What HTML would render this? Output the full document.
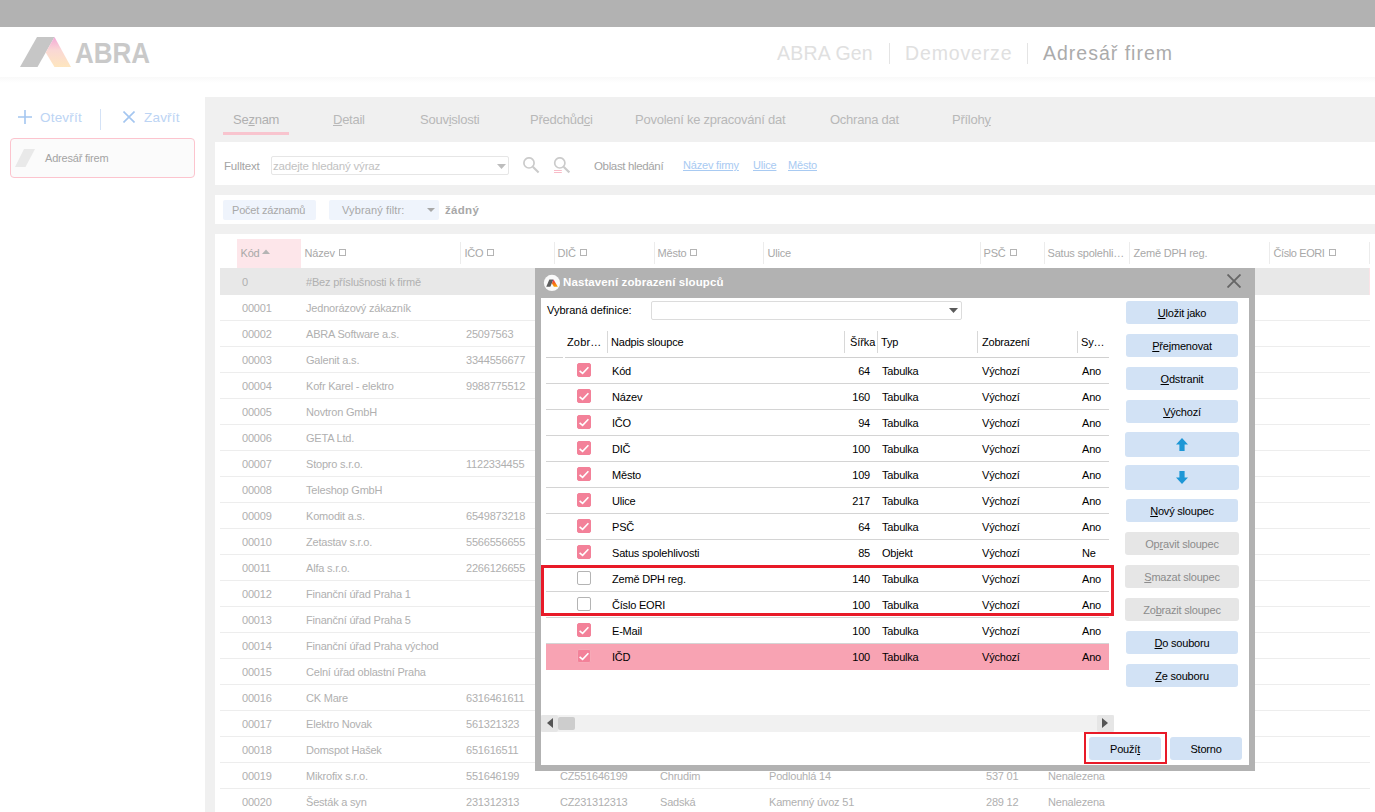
<!DOCTYPE html>
<html lang="cs"><head><meta charset="utf-8"><title>Adresář firem</title>
<style>
*{box-sizing:border-box;margin:0;padding:0}
html,body{width:1375px;height:812px;overflow:hidden;background:#fff}
body{position:relative;font-family:"Liberation Sans",sans-serif;font-size:11px;color:#b0b0b0;letter-spacing:-0.2px}
.abs,.topbar,.hdrline,.logo,.brand,.crumb,.side a,.side i,.panel,.tabs span,.bar,.tbl,.row,.row span,.th,.th span,.dlg,.dlg *{position:absolute}
.topbar{left:0;top:0;width:1375px;height:27px;background:#b2b2b2}
.hdrline{left:0;top:77px;width:1375px;height:6px;background:linear-gradient(#f9f9f9,#fff)}
.logo{left:20px;top:37px}
.brand{left:75px;top:37px;font-size:26px;line-height:26px;font-weight:bold;color:#c9c9c9;letter-spacing:0;transform:scaleY(1.17);transform-origin:0 0}
.crumb{top:40px;font-size:19.5px;line-height:26px;color:#e0e0e0;letter-spacing:0.2px;white-space:nowrap}
.crumb.cur{color:#ababab}
.vsep{position:absolute;width:1px;background:#e4e4e4}
.lnk{position:absolute;margin-top:1px;font-size:13.5px;line-height:18px;color:#bcd4f4;letter-spacing:0.2px;white-space:nowrap}
.item{position:absolute;left:10px;top:138px;width:185px;height:40px;border:1px solid #fcc4ce;border-radius:4px;background:#fbfbfb}
.item span{position:absolute;left:34px;top:12px;line-height:14px;color:#a4a4a4;white-space:nowrap}
.panel{left:205px;top:97px;width:1170px;height:715px;background:#f0f0f0}
.tab{position:absolute;top:111px;font-size:13px;line-height:18px;color:#b8b8b8;letter-spacing:-0.25px;white-space:nowrap}
.tab u{text-decoration-thickness:1px;text-underline-offset:1px}
.tabline{position:absolute;left:223px;top:132px;width:66px;height:3px;background:#f8c4ce}
.bar{left:215px;width:1160px;background:#fff}
.t{position:absolute;white-space:nowrap;line-height:14px}
.tbl{left:0;top:0;width:1375px;height:812px;overflow:hidden}
.row{left:220px;width:1150px;height:26px;border-bottom:1px solid #ededed;line-height:27px}
.row.sel{background:#e8e8e8;border-right:1px solid #fbe3e7;border-bottom:0;height:27px;margin-top:-1px;line-height:29px}
.row span{top:0;white-space:nowrap;margin-left:-220px}
.th{top:245.5px;margin-left:-0.5px;line-height:14px;color:#a8a8a8;white-space:nowrap}
.th b{display:inline-block;width:7px;height:7px;border:1px solid #b4b4b4;margin-left:4px;vertical-align:1px}
.hs{position:absolute;top:242px;width:1px;height:22px;background:#ececec}
/* dialog */
.dlg{left:535px;top:268px;width:720px;height:503px;background:#b2b2b2;color:#000}
.dlg .in{left:6px;top:30px;width:708px;height:467px;background:#fff}
.dlg .ttl{left:28px;top:7px;font-size:11.5px;line-height:15px;font-weight:bold;color:#fff;letter-spacing:0.1px;white-space:nowrap}
.dt{position:absolute;white-space:nowrap;line-height:14px;color:#000}
.btn{position:absolute;left:1126px;width:112px;height:23px;border-radius:3px;background:#d2e2f5;color:#000;text-align:center;line-height:24px;white-space:nowrap}
.btn.dis{background:#e6e6e6;color:#8c8c8c;left:1125px;width:114px}
.btn u{text-underline-offset:1px}
.drow{position:absolute;left:546px;width:563px;height:26px;border-bottom:1px solid #d4d4d4;line-height:27px;color:#000}
.drow.dsel{background:#f8a3b3;border-bottom:0;height:26px;line-height:27px}
.drow span{position:absolute;top:0;white-space:nowrap}
.drow .c1{left:66px}.drow .c2{right:239px}.drow .c3{left:336px}.drow .c4{left:436px}.drow .c5{left:536px}
.cb{position:absolute;left:31px;top:5px;width:14px;height:14px;border:1px solid #b4b4b4;border-radius:2px;background:#fff}
.cb.on{background:#f38199;border-color:#f38199}
.dsel .cb{top:5px}
.dsel .cb.on{border-color:#f7a9b7}
.cb svg{position:absolute;left:-1px;top:-1px}
.red{position:absolute;border:3px solid #e81a28}

</style></head><body>
<div class="topbar"></div>
<div class="hdrline"></div>
<svg class="logo" width="52" height="31" viewBox="0 0 52 31"><defs><linearGradient id="lg" x1="0" y1="0" x2="0" y2="1"><stop offset="0" stop-color="#f4a8d8"/><stop offset="0.45" stop-color="#fad8d4"/><stop offset="1" stop-color="#fee6bf"/></linearGradient></defs><polygon points="17,0 34.5,0 17.5,30 0,30" fill="#c6c6c6"/><polygon points="34.5,0 51,30 34.5,30 25.7,15.5" fill="url(#lg)"/></svg>
<div class="brand">ABRA</div>
<div class="crumb" style="left:777px">ABRA Gen</div>
<div class="vsep" style="left:889px;top:43px;height:21px"></div>
<div class="crumb" style="left:905px;letter-spacing:0.85px">Demoverze</div>
<div class="vsep" style="left:1027px;top:43px;height:21px"></div>
<div class="crumb cur" style="left:1043px;letter-spacing:1px">Adresář firem</div>

<svg class="abs" style="left:18px;top:110px" width="14" height="14" viewBox="0 0 14 14"><path d="M7 0V14M0 7H14" stroke="#a4c6f0" stroke-width="1.6" fill="none"/></svg>
<div class="lnk" style="left:40px;top:108px">Otevřít</div>
<div class="vsep" style="left:100px;top:109px;height:21px;background:#d4e2f6"></div>
<svg class="abs" style="left:123px;top:111px" width="12" height="12" viewBox="0 0 12 12"><path d="M0.5 0.5L11.5 11.5M11.5 0.5L0.5 11.5" stroke="#a4c6f0" stroke-width="1.6" fill="none"/></svg>
<div class="lnk" style="left:144px;top:108px">Zavřít</div>
<div class="item"><svg class="abs" style="left:4px;top:10px" width="21" height="19" viewBox="0 0 21 19"><polygon points="9,0 20,0 10.5,18 0,18" fill="#e9e9e9"/></svg><span>Adresář firem</span></div>

<div class="panel"></div>
<div class="tab" style="left:233px;color:#b0b0b0">Se<u>z</u>nam</div>
<div class="tabline"></div>
<div class="tab" style="left:333px"><u>D</u>etail</div>
<div class="tab" style="left:420px">Souv<u>i</u>slosti</div>
<div class="tab" style="left:530px">Předchůd<u>c</u>i</div>
<div class="tab" style="left:635px">Povolení ke zpracování dat</div>
<div class="tab" style="left:830px">Ochrana dat</div>
<div class="tab" style="left:952px">Příloh<u>y</u></div>

<div class="bar" style="top:142px;height:43px"></div>
<div class="t" style="left:224px;top:159px;color:#a4a4a4;font-size:11.5px">Fulltext</div>
<div class="abs" style="left:271px;top:156px;width:238px;height:19px;border:1px solid #e6e6e6;border-radius:2px;background:#fff"></div>
<div class="t" style="left:273px;top:159px;color:#c2c2c2;font-size:11.5px">zadejte hledaný výraz</div>
<svg class="abs" style="left:497px;top:164px" width="9" height="5" viewBox="0 0 9 5"><polygon points="0,0 9,0 4.5,5" fill="#bdbdbd"/></svg>
<svg class="abs" style="left:523px;top:157px" width="17" height="17" viewBox="0 0 17 17"><circle cx="6" cy="5.9" r="5.1" fill="none" stroke="#cbcbcb" stroke-width="1.7"/><path d="M9.8 9.7L15.6 15.4" stroke="#cbcbcb" stroke-width="2.1"/></svg>
<svg class="abs" style="left:553px;top:157px" width="17" height="17" viewBox="0 0 17 17"><circle cx="6.8" cy="5.9" r="5.1" fill="none" stroke="#cbcbcb" stroke-width="1.7"/><path d="M10.6 9.7L16.4 15.4" stroke="#cbcbcb" stroke-width="2.1"/><path d="M1 13.5H8.8M1 15.5H8.8" stroke="#f8bcc8" stroke-width="1"/></svg>
<div class="t" style="left:594px;top:159px;color:#a4a4a4;font-size:11.5px;letter-spacing:-0.35px">Oblast hledání</div>
<div class="t" style="left:683px;top:158px;color:#a8caf2;text-decoration:underline">Název firmy</div>
<div class="t" style="left:753px;top:158px;color:#a8caf2;text-decoration:underline">Ulice</div>
<div class="t" style="left:788px;top:158px;color:#a8caf2;text-decoration:underline">Město</div>

<div class="bar" style="top:195px;height:29px"></div>
<div class="abs" style="left:223px;top:200px;width:93px;height:20px;border-radius:2px;background:#eff4fc"></div>
<div class="t" style="left:232px;top:203px;color:#a8a8a8">Počet záznamů</div>
<div class="abs" style="left:329px;top:200px;width:110px;height:20px;border-radius:2px;background:#eff4fc"></div>
<div class="t" style="left:342px;top:203px;color:#a8a8a8;letter-spacing:0.12px">Vybraný filtr:</div>
<svg class="abs" style="left:427px;top:208px" width="8" height="4" viewBox="0 0 8 4"><polygon points="0,0 8,0 4,4" fill="#a8a8a8"/></svg>
<div class="t" style="left:445px;top:203px;color:#a8a8a8;font-weight:bold;font-size:11.5px;letter-spacing:0.3px">žádný</div>

<div class="bar" style="top:234px;height:578px"></div>
<div class="abs" style="left:237px;top:239px;width:64px;height:29px;background:#fde6ea"></div>
<div class="th" style="left:241px">Kód <svg width="8" height="5" viewBox="0 0 8 5" style="margin-left:0;vertical-align:2.5px"><polygon points="0,5 8,5 4,0.5" fill="#b4b4b4"/></svg></div>
<div class="th" style="left:305px">Název<b></b></div>
<div class="hs" style="left:460px"></div>
<div class="th" style="left:465px">IČO<b></b></div>
<div class="hs" style="left:554px"></div>
<div class="th" style="left:558px">DIČ<b></b></div>
<div class="hs" style="left:654px"></div>
<div class="th" style="left:658px">Město<b></b></div>
<div class="hs" style="left:763px"></div>
<div class="th" style="left:768px">Ulice</div>
<div class="hs" style="left:980px"></div>
<div class="th" style="left:984px">PSČ<b></b></div>
<div class="hs" style="left:1044px"></div>
<div class="th" style="left:1048px">Satus spolehli…</div>
<div class="hs" style="left:1129px"></div>
<div class="th" style="left:1134px">Země DPH reg.</div>
<div class="hs" style="left:1269px"></div>
<div class="th" style="left:1274px;letter-spacing:-0.4px">Číslo EORI<b></b></div>
<div class="hs" style="left:1369px"></div>
<div class="tbl">
<div class="row sel" style="top:269px"><span style="left:242px">0</span><span style="left:306px">#Bez příslušnosti k firmě</span></div>
<div class="row" style="top:295px"><span style="left:242px">00001</span><span style="left:306px">Jednorázový zákazník</span></div>
<div class="row" style="top:321px"><span style="left:242px">00002</span><span style="left:306px">ABRA Software a.s.</span><span style="left:466px">25097563</span></div>
<div class="row" style="top:347px"><span style="left:242px">00003</span><span style="left:306px">Galenit a.s.</span><span style="left:466px">3344556677</span></div>
<div class="row" style="top:373px"><span style="left:242px">00004</span><span style="left:306px">Kofr Karel - elektro</span><span style="left:466px">9988775512</span></div>
<div class="row" style="top:399px"><span style="left:242px">00005</span><span style="left:306px">Novtron GmbH</span></div>
<div class="row" style="top:425px"><span style="left:242px">00006</span><span style="left:306px">GETA Ltd.</span></div>
<div class="row" style="top:451px"><span style="left:242px">00007</span><span style="left:306px">Stopro s.r.o.</span><span style="left:466px">1122334455</span></div>
<div class="row" style="top:477px"><span style="left:242px">00008</span><span style="left:306px">Teleshop GmbH</span></div>
<div class="row" style="top:503px"><span style="left:242px">00009</span><span style="left:306px">Komodit a.s.</span><span style="left:466px">6549873218</span></div>
<div class="row" style="top:529px"><span style="left:242px">00010</span><span style="left:306px">Zetastav s.r.o.</span><span style="left:466px">5566556655</span></div>
<div class="row" style="top:555px"><span style="left:242px">00011</span><span style="left:306px">Alfa s.r.o.</span><span style="left:466px">2266126655</span></div>
<div class="row" style="top:581px"><span style="left:242px">00012</span><span style="left:306px">Finanční úřad Praha 1</span></div>
<div class="row" style="top:607px"><span style="left:242px">00013</span><span style="left:306px">Finanční úřad Praha 5</span></div>
<div class="row" style="top:633px"><span style="left:242px">00014</span><span style="left:306px">Finanční úřad Praha východ</span></div>
<div class="row" style="top:659px"><span style="left:242px">00015</span><span style="left:306px">Celní úřad oblastní Praha</span></div>
<div class="row" style="top:685px"><span style="left:242px">00016</span><span style="left:306px">CK Mare</span><span style="left:466px">6316461611</span></div>
<div class="row" style="top:711px"><span style="left:242px">00017</span><span style="left:306px">Elektro Novak</span><span style="left:466px">561321323</span></div>
<div class="row" style="top:737px"><span style="left:242px">00018</span><span style="left:306px">Domspot Hašek</span><span style="left:466px">651616511</span></div>
<div class="row" style="top:763px"><span style="left:242px">00019</span><span style="left:306px">Mikrofix s.r.o.</span><span style="left:466px">551646199</span><span style="left:560px">CZ551646199</span><span style="left:660px">Chrudim</span><span style="left:769px">Podlouhlá 14</span><span style="left:986px">537 01</span><span style="left:1048px">Nenalezena</span></div>
<div class="row" style="top:789px"><span style="left:242px">00020</span><span style="left:306px">Šesták a syn</span><span style="left:466px">231312313</span><span style="left:560px">CZ231312313</span><span style="left:660px">Sadská</span><span style="left:769px">Kamenný úvoz 51</span><span style="left:986px">289 12</span><span style="left:1048px">Nenalezena</span></div>
</div>
<div class="dlg">
<div class="in"></div>
<svg style="left:8px;top:6px" width="18" height="18" viewBox="0 0 18 18"><defs><linearGradient id="ig" x1="0" y1="0" x2="0" y2="1"><stop offset="0" stop-color="#e81e78"/><stop offset="0.45" stop-color="#f4601e"/><stop offset="1" stop-color="#f9a400"/></linearGradient></defs><g transform="translate(0.45,0.45)"><circle cx="8.5" cy="8.5" r="8.1" fill="#fafafa"/><polygon points="5.9,5 10,5 6.9,12.2 2.8,12.2" fill="#5e5e5e"/><polygon points="10.1,5 14.4,12.2 10.4,12.2 8.4,8.8" fill="url(#ig)"/></g></svg>
<div class="ttl">Nastavení zobrazení sloupců</div>
<svg style="left:692px;top:6px" width="14" height="14" viewBox="0 0 14 14"><path d="M0.5 0.5L13.5 13.5M13.5 0.5L0.5 13.5" stroke="#666" stroke-width="1.9" fill="none"/></svg>
</div>
<div class="dt" style="left:547px;top:303px;letter-spacing:0">Vybraná definice:</div>
<div class="abs" style="left:651px;top:301px;width:311px;height:19px;border:1px solid #dcdcdc;border-radius:2px;background:#fff"></div>
<svg class="abs" style="left:949px;top:308px" width="9" height="5" viewBox="0 0 9 5"><polygon points="0,0 9,0 4.5,5" fill="#5a5a5a"/></svg>

<div class="dt" style="left:567px;top:335px;letter-spacing:0.15px">Zobr…</div>
<div class="dt" style="left:611px;top:335px">Nadpis sloupce</div>
<div class="dt" style="left:850px;top:335px;letter-spacing:-0.1px">Šířka</div>
<div class="dt" style="left:881px;top:335px">Typ</div>
<div class="dt" style="left:982px;top:335px">Zobrazení</div>
<div class="dt" style="left:1081px;top:335px">Sy…</div>
<div class="abs" style="left:607px;top:331px;width:1px;height:22px;background:#d8d8d8"></div>
<div class="abs" style="left:844px;top:331px;width:1px;height:22px;background:#d8d8d8"></div>
<div class="abs" style="left:877px;top:331px;width:1px;height:22px;background:#d8d8d8"></div>
<div class="abs" style="left:977px;top:331px;width:1px;height:22px;background:#d8d8d8"></div>
<div class="abs" style="left:1077px;top:331px;width:1px;height:22px;background:#d8d8d8"></div>
<div class="abs" style="left:546px;top:357px;width:17px;height:1px;background:#d0d0d0"></div>
<div class="abs" style="left:565px;top:357px;width:544px;height:1px;background:#d0d0d0"></div>
<div class="drow" style="top:358px"><i class="cb on"><svg width="14" height="14" viewBox="0 0 14 14"><path d="M2.6 7.9 L5.6 10.4 L11.4 4.3" fill="none" stroke="#fff" stroke-width="1.6"/></svg></i><span class="c1">Kód</span><span class="c2">64</span><span class="c3">Tabulka</span><span class="c4">Výchozí</span><span class="c5">Ano</span></div>
<div class="drow" style="top:384px"><i class="cb on"><svg width="14" height="14" viewBox="0 0 14 14"><path d="M2.6 7.9 L5.6 10.4 L11.4 4.3" fill="none" stroke="#fff" stroke-width="1.6"/></svg></i><span class="c1">Název</span><span class="c2">160</span><span class="c3">Tabulka</span><span class="c4">Výchozí</span><span class="c5">Ano</span></div>
<div class="drow" style="top:410px"><i class="cb on"><svg width="14" height="14" viewBox="0 0 14 14"><path d="M2.6 7.9 L5.6 10.4 L11.4 4.3" fill="none" stroke="#fff" stroke-width="1.6"/></svg></i><span class="c1">IČO</span><span class="c2">94</span><span class="c3">Tabulka</span><span class="c4">Výchozí</span><span class="c5">Ano</span></div>
<div class="drow" style="top:436px"><i class="cb on"><svg width="14" height="14" viewBox="0 0 14 14"><path d="M2.6 7.9 L5.6 10.4 L11.4 4.3" fill="none" stroke="#fff" stroke-width="1.6"/></svg></i><span class="c1">DIČ</span><span class="c2">100</span><span class="c3">Tabulka</span><span class="c4">Výchozí</span><span class="c5">Ano</span></div>
<div class="drow" style="top:462px"><i class="cb on"><svg width="14" height="14" viewBox="0 0 14 14"><path d="M2.6 7.9 L5.6 10.4 L11.4 4.3" fill="none" stroke="#fff" stroke-width="1.6"/></svg></i><span class="c1">Město</span><span class="c2">109</span><span class="c3">Tabulka</span><span class="c4">Výchozí</span><span class="c5">Ano</span></div>
<div class="drow" style="top:488px"><i class="cb on"><svg width="14" height="14" viewBox="0 0 14 14"><path d="M2.6 7.9 L5.6 10.4 L11.4 4.3" fill="none" stroke="#fff" stroke-width="1.6"/></svg></i><span class="c1">Ulice</span><span class="c2">217</span><span class="c3">Tabulka</span><span class="c4">Výchozí</span><span class="c5">Ano</span></div>
<div class="drow" style="top:514px"><i class="cb on"><svg width="14" height="14" viewBox="0 0 14 14"><path d="M2.6 7.9 L5.6 10.4 L11.4 4.3" fill="none" stroke="#fff" stroke-width="1.6"/></svg></i><span class="c1">PSČ</span><span class="c2">64</span><span class="c3">Tabulka</span><span class="c4">Výchozí</span><span class="c5">Ano</span></div>
<div class="drow" style="top:540px"><i class="cb on"><svg width="14" height="14" viewBox="0 0 14 14"><path d="M2.6 7.9 L5.6 10.4 L11.4 4.3" fill="none" stroke="#fff" stroke-width="1.6"/></svg></i><span class="c1">Satus spolehlivosti</span><span class="c2">85</span><span class="c3">Objekt</span><span class="c4">Výchozí</span><span class="c5">Ne</span></div>
<div class="drow" style="top:566px"><i class="cb"></i><span class="c1">Země DPH reg.</span><span class="c2">140</span><span class="c3">Tabulka</span><span class="c4">Výchozí</span><span class="c5">Ano</span></div>
<div class="drow" style="top:592px"><i class="cb"></i><span class="c1">Číslo EORI</span><span class="c2">100</span><span class="c3">Tabulka</span><span class="c4">Výchozí</span><span class="c5">Ano</span></div>
<div class="drow" style="top:618px"><i class="cb on"><svg width="14" height="14" viewBox="0 0 14 14"><path d="M2.6 7.9 L5.6 10.4 L11.4 4.3" fill="none" stroke="#fff" stroke-width="1.6"/></svg></i><span class="c1">E-Mail</span><span class="c2">100</span><span class="c3">Tabulka</span><span class="c4">Výchozí</span><span class="c5">Ano</span></div>
<div class="drow dsel" style="top:644px"><i class="cb on"><svg width="14" height="14" viewBox="0 0 14 14"><path d="M2.6 7.9 L5.6 10.4 L11.4 4.3" fill="none" stroke="#fff" stroke-width="1.6"/></svg></i><span class="c1">IČD</span><span class="c2">100</span><span class="c3">Tabulka</span><span class="c4">Výchozí</span><span class="c5">Ano</span></div>
<div class="red" style="left:541px;top:565px;width:573px;height:51px"></div>
<div class="abs" style="left:541px;top:715px;width:573px;height:17px;background:#f1f1f1"></div>
<div class="abs" style="left:541px;top:715px;width:17px;height:17px;background:#e6e6e6;border-radius:2px"></div>
<svg class="abs" style="left:547px;top:718px" width="6" height="10" viewBox="0 0 6 10"><polygon points="6,0 6,10 0,5" fill="#555"/></svg>
<div class="abs" style="left:558px;top:717px;width:17px;height:13px;background:#cdcdcd;border-radius:2px"></div>
<div class="abs" style="left:1097px;top:715px;width:17px;height:17px;background:#e6e6e6;border-radius:2px"></div>
<svg class="abs" style="left:1102px;top:718px" width="6" height="10" viewBox="0 0 6 10"><polygon points="0,0 0,10 6,5" fill="#555"/></svg>

<div class="btn" style="top:301px"><u>U</u>ložit jako</div>
<div class="btn" style="top:334px"><u>P</u>řejmenovat</div>
<div class="btn" style="top:367px"><u>O</u>dstranit</div>
<div class="btn" style="top:400px"><u>V</u>ýchozí</div>
<div class="btn" style="top:432px;left:1125px;width:114px;height:25px"><svg class="abs" style="left:51px;top:6px" width="12" height="13" viewBox="0 0 12 13"><polygon points="6,0 12,6.5 8.6,6.5 8.6,13 3.4,13 3.4,6.5 0,6.5" fill="#1d97d6"/></svg></div>
<div class="btn" style="top:465px;left:1125px;width:114px;height:25px"><svg class="abs" style="left:51px;top:6px" width="12" height="13" viewBox="0 0 12 13"><polygon points="6,13 12,6.5 8.6,6.5 8.6,0 3.4,0 3.4,6.5 0,6.5" fill="#1d97d6"/></svg></div>
<div class="btn" style="top:499px"><u>N</u>ový sloupec</div>
<div class="btn dis" style="top:532px">Op<u>r</u>avit sloupec</div>
<div class="btn dis" style="top:565px"><u>S</u>mazat sloupec</div>
<div class="btn dis" style="top:598px">Zo<u>b</u>razit sloupec</div>
<div class="btn" style="top:631px"><u>D</u>o souboru</div>
<div class="btn" style="top:664px"><u>Z</u>e souboru</div>

<div class="red" style="left:1084px;top:732px;width:83px;height:32px;border-width:2px"></div>
<div class="btn" style="left:1089px;top:737px;width:72px">Použí<u>t</u></div>
<div class="btn" style="left:1170px;top:737px;width:72px">Storno</div>
</body></html>
